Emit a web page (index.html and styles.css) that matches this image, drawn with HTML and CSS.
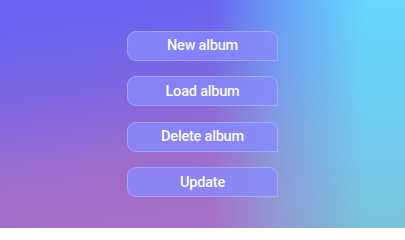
FILE: index.html
```html
<!DOCTYPE html>
<html>
<head>
<meta charset="utf-8">
<link rel="stylesheet" href="styles.css">
</head>
<body>
<main class="screen">
  <div class="menu">
    <button class="btn">New album</button>
    <button class="btn">Load album</button>
    <button class="btn">Delete album</button>
    <button class="btn">Update</button>
  </div>
</main>
</body>
</html>
```
FILE: styles.css
```css
html, body {
  margin: 0;
  padding: 0;
  width: 405px;
  height: 228px;
  overflow: hidden;
}
.screen {
  position: relative;
  width: 405px;
  height: 228px;
  display: flex;
  align-items: center;
  justify-content: center;
  background: linear-gradient(172deg, #6b63ef 12%, #7c66e4 35%, #9a6ccf 60%, #a870c8 85%);
}
.screen::before {
  content: "";
  position: absolute;
  inset: 0;
  background: linear-gradient(180deg, #64d8fe 0%, #6ccdf2 45%, #7ac2da 100%);
  -webkit-mask-image: linear-gradient(90deg, transparent 52%, rgba(0,0,0,0.55) 70%, #000 90%);
  mask-image: linear-gradient(90deg, transparent 52%, rgba(0,0,0,0.55) 70%, #000 90%);
}
.menu {
  position: relative;
  display: flex;
  flex-direction: column;
  gap: 15.5px;
}
.btn {
  width: 151px;
  height: 30px;
  box-sizing: border-box;
  border: 1px solid rgba(205,210,255,0.4);
  border-radius: 9px 9px 0 9px;
  background: rgba(134,138,252,0.78);
  color: #fafaff;
  font-family: Roboto, "Liberation Sans", sans-serif;
  font-size: 14.5px;
  font-weight: 500;
  letter-spacing: -0.2px;
  padding: 0;
  display: flex;
  align-items: center;
  justify-content: center;
}
```
